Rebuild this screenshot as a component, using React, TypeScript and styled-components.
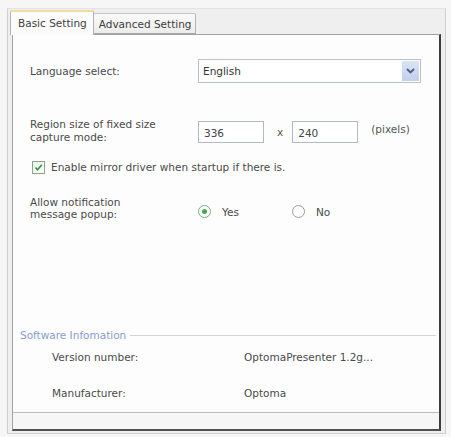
import React from "react";
import styled, { createGlobalStyle } from "styled-components";

const GlobalStyle = createGlobalStyle`
  html, body { margin: 0; padding: 0; }
  body {
    background: #f6f6f6;
    font-family: "DejaVu Sans", Verdana, sans-serif;
    font-size: 10.5px;
    color: #4a4a4a;
  }
`;

const Window = styled.div`
  width: 451px;
  height: 437px;
  box-sizing: border-box;
  padding: 8px 5px 3px 7px;
`;

const Frame = styled.div`
  height: 100%;
  box-sizing: border-box;
  border: 1px solid #cfcfcf;
  border-top-color: #e4e4e4;
  background: #efefef;
  padding: 1px 4px 2px 4px;
  display: flex;
  flex-direction: column;
`;

const TabStrip = styled.div`
  display: flex;
  align-items: flex-end;
  height: 24px;
  margin-left: -2px;
`;

const Tab = styled.div<{ $active?: boolean }>`
  position: relative;
  z-index: ${(p) => (p.$active ? 2 : 1)};
  box-sizing: border-box;
  height: ${(p) => (p.$active ? "25px" : "21px")};
  margin-bottom: ${(p) => (p.$active ? "-1px" : "0")};
  padding: ${(p) => (p.$active ? "5px 6px 0 7px" : "4px 3px 0 5px")};
  border: 1px solid #b4b4b4;
  border-bottom: ${(p) => (p.$active ? "none" : "1px solid #a8a8a8")};
  border-top: ${(p) => (p.$active ? "2px solid #f0dc9e" : "1px solid #c4c4c4")};
  border-radius: 2px 2px 0 0;
  background: ${(p) =>
    p.$active ? "#fbfbfb" : "linear-gradient(#fafafa, #ececec)"};
  color: #3e3e3e;
  white-space: nowrap;
  line-height: 13px;
  margin-left: ${(p) => (p.$active ? "0" : "-1px")};
`;

const Panel = styled.div`
  flex: 1;
  display: flex;
  flex-direction: column;
  border: 1px solid #a2a2a2;
  border-right: 2px solid #3c3c3c;
  border-bottom: 2px solid #505050;
  background: #fdfdfd;
`;

const Content = styled.div`
  flex: 1;
  display: flex;
  flex-direction: column;
  padding: 0 0 0 17px;
  border-bottom: 1px solid #bdbdbd;
`;

const Footer = styled.div`
  height: 16px;
  background: #f6f6f6;
`;

const FieldRow = styled.div<{ $top: number }>`
  display: grid;
  grid-template-columns: 168px 1fr;
  align-items: start;
  margin-top: ${(p) => p.$top}px;
`;

const Label = styled.div<{ $lh?: number }>`
  line-height: ${(p) => p.$lh ?? 13}px;
  color: #4a4a4a;
`;

const SelectBox = styled.div`
  width: 223px;
  height: 24px;
  box-sizing: border-box;
  border: 1px solid #b9c0c8;
  background: #fff;
  display: flex;
  align-items: center;
  justify-content: space-between;
  padding: 0 1px 0 4px;
  color: #333;
`;

const DropButton = styled.div`
  width: 17px;
  height: 20px;
  background: linear-gradient(#dbe4f4, #c3d0ea);
  display: flex;
  align-items: center;
  justify-content: center;
`;

const SizeGroup = styled.div`
  display: flex;
  align-items: center;
  margin-top: 3px;
`;

const TextBox = styled.div`
  width: 66px;
  height: 22px;
  box-sizing: border-box;
  border: 1px solid #b2b9c2;
  background: #fff;
  padding: 4px 5px 0;
  line-height: 14px;
  color: #444;
`;

const Times = styled.span`
  margin: 0 9px 0 13px;
  color: #555;
`;

const Unit = styled.span`
  margin-left: 13px;
  margin-top: -6px;
  color: #555;
`;

const CheckRow = styled.div`
  display: flex;
  align-items: center;
  margin-top: 16px;
  margin-left: 2px;
  height: 14px;
`;

const CheckBox = styled.div`
  width: 13px;
  height: 13px;
  box-sizing: border-box;
  border: 1px solid #86a886;
  background: linear-gradient(135deg, #eef3ee, #ffffff);
  display: flex;
  align-items: center;
  justify-content: center;
  margin-right: 6px;
`;

const RadioGroup = styled.div`
  display: flex;
  align-items: center;
  margin-top: 9px;
`;

const RadioItem = styled.div<{ $width: number }>`
  display: flex;
  align-items: center;
  width: ${(p) => p.$width}px;
`;

const RadioCircle = styled.div<{ $on?: boolean }>`
  width: 13px;
  height: 13px;
  box-sizing: border-box;
  border-radius: 50%;
  border: 1px solid ${(p) => (p.$on ? "#7dab7d" : "#9a9a9a")};
  background: #fff;
  display: flex;
  align-items: center;
  justify-content: center;
  margin-right: 11px;
  &::after {
    content: "";
    display: ${(p) => (p.$on ? "block" : "none")};
    width: 5px;
    height: 5px;
    border-radius: 50%;
    background: #3fae46;
  }
`;

const InfoGroup = styled.div`
  margin-top: auto;
  margin-left: -10px;
  margin-right: 3px;
  padding-bottom: 12px;
`;

const Legend = styled.div`
  display: flex;
  align-items: center;
  color: #8a9ccc;
  &::after {
    content: "";
    flex: 1;
    height: 1px;
    background: #d4d4d4;
    margin-left: 4px;
  }
`;

const InfoRow = styled.div<{ $top: number }>`
  display: grid;
  grid-template-columns: 192px 1fr;
  padding-left: 32px;
  margin-top: ${(p) => p.$top}px;
  line-height: 14px;
  color: #4a4a4a;
`;

export default function App() {
  return (
    <>
      <GlobalStyle />
      <Window>
        <Frame>
          <TabStrip>
            <Tab $active>Basic Setting</Tab>
            <Tab>Advanced Setting</Tab>
          </TabStrip>
          <Panel>
            <Content>
              <FieldRow $top={24}>
                <Label style={{ lineHeight: "24px" }}>Language select:</Label>
                <SelectBox>
                  <span>English</span>
                  <DropButton>
                    <svg width="9" height="6" viewBox="0 0 9 6">
                      <path
                        d="M1 1 L4.5 4.5 L8 1"
                        fill="none"
                        stroke="#4b5f86"
                        strokeWidth="1.8"
                      />
                    </svg>
                  </DropButton>
                </SelectBox>
              </FieldRow>

              <FieldRow $top={35}>
                <Label>
                  Region size of fixed size
                  <br />
                  capture mode:
                </Label>
                <SizeGroup>
                  <TextBox>336</TextBox>
                  <Times>x</Times>
                  <TextBox>240</TextBox>
                  <Unit>(pixels)</Unit>
                </SizeGroup>
              </FieldRow>

              <CheckRow>
                <CheckBox>
                  <svg width="9" height="9" viewBox="0 0 9 9">
                    <path
                      d="M1.5 4.5 L3.5 6.8 L7.8 1.8"
                      fill="none"
                      stroke="#2f9a35"
                      strokeWidth="1.6"
                    />
                  </svg>
                </CheckBox>
                <span>Enable mirror driver when startup if there is.</span>
              </CheckRow>

              <FieldRow $top={22}>
                <Label $lh={12}>
                  Allow notification
                  <br />
                  message popup:
                </Label>
                <RadioGroup>
                  <RadioItem $width={94}>
                    <RadioCircle $on />
                    <span>Yes</span>
                  </RadioItem>
                  <RadioItem $width={60}>
                    <RadioCircle />
                    <span>No</span>
                  </RadioItem>
                </RadioGroup>
              </FieldRow>

              <InfoGroup>
                <Legend>Software Infomation</Legend>
                <InfoRow $top={9}>
                  <span>Version number:</span>
                  <span>OptomaPresenter 1.2g...</span>
                </InfoRow>
                <InfoRow $top={22}>
                  <span>Manufacturer:</span>
                  <span>Optoma</span>
                </InfoRow>
              </InfoGroup>
            </Content>
            <Footer />
          </Panel>
        </Frame>
      </Window>
    </>
  );
}
